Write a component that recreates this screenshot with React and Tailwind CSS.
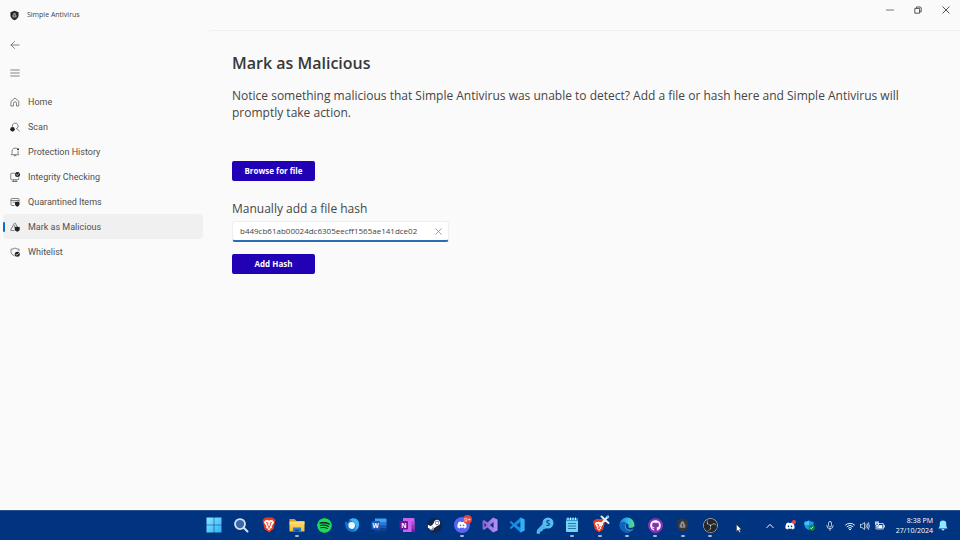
import { useState } from "react";
import { FaDiscord, FaSteamSymbol, FaGithub } from "react-icons/fa";
import { SiSpotify, SiObsstudio } from "react-icons/si";

const stroke = { fill: "none", stroke: "currentColor", strokeLinecap: "round", strokeLinejoin: "round" };

function ShieldLogo({ className, body = "#25262b", mark = "#8d9095" }) {
  return (
    <svg viewBox="0 0 20 22" className={className} aria-hidden="true">
      <path d="M10 0.500 19 3.500V11c0 5-4 8.500-9 10.500C5 19.500 1 16 1 11V3.500Z" fill={body} />
      <path d="M5.500 10H7V8a3 3 0 0 1 6 0v2h1.500v5.500h-9Z" fill={mark} />
      <path d="M10 10v3" stroke={body} strokeWidth="1.500" />
    </svg>
  );
}

function LineIcon({ children, className = "h-[10px] w-[10px]" }) {
  return (
    <svg viewBox="0 0 20 20" className={className} strokeWidth="1.400" {...stroke} aria-hidden="true">
      {children}
    </svg>
  );
}

const icons = {
  home: (
    <path d="M2.500 8.500 10 2l7.500 6.500V18H13v-5.500a3 3 0 0 0-6 0V18H2.500Z" />
  ),
  scan: (
    <>
      <path d="M4.500 9a6 6 0 1 1 8.500 4.500M14 13.500l5 5" />
      <circle cx="5" cy="14.500" r="4.500" fill="#222" stroke="none" />
    </>
  ),
  bell: (
    <>
      <path d="M13 2.500A6.500 6.500 0 0 0 4 8.500V13l-1.500 2.500h15L16 13V9M8 16a2 2 0 0 0 4 0" />
      <circle cx="16" cy="4.500" r="2" fill="#222" stroke="none" />
    </>
  ),
  monitor: (
    <>
      <path d="M9 2.500H3A1.500 1.500 0 0 0 1.500 4v10A1.500 1.500 0 0 0 3 15.500h13a1.500 1.500 0 0 0 1.500-1.500v-2M7 16v3M12 16v3M5 19h9" />
      <circle cx="15" cy="5" r="5" fill="#222" stroke="none" />
      <path d="m12.500 5 2 2 3-3.500" stroke="#fff" />
    </>
  ),
  box: (
    <>
      <path d="M8 17H4a2 2 0 0 1-2-2V4.500A1.500 1.500 0 0 1 3.500 3h13A1.500 1.500 0 0 1 18 4.500V9M2 7h16M6 10.500h5" />
      <path d="M14.500 9 19 10.500V14c0 3-2 4.500-4.500 5.500C12 18.500 10 17 10 14v-3.500Z" fill="#222" stroke="none" />
    </>
  ),
  warning: (
    <>
      <path d="M8 17H2.500a1 1 0 0 1-1-1.500L8.500 3a1.400 1.400 0 0 1 2.500 0l3 5.500M9.500 7v4" />
      <path d="M14.500 9 19.500 10.500V14c0 3-2 4.500-5 5.500C11.500 18.500 9.500 17 9.500 14v-3.500Z" fill="#222" stroke="none" />
    </>
  ),
  whitelist: (
    <>
      <path d="M8.500 17.500C4.500 16 2 13 2 9V4.500C5 4.500 7.500 3.500 10 2c2.500 1.500 5 2.500 8 2.500V8" />
      <circle cx="14.500" cy="14.500" r="5" fill="#222" stroke="none" />
      <path d="m12 14.500 2 2 3-3.500" stroke="#fff" />
    </>
  ),
};

const nav = [
  ["Home", "home"],
  ["Scan", "scan"],
  ["Protection History", "bell"],
  ["Integrity Checking", "monitor"],
  ["Quarantined Items", "box"],
  ["Mark as Malicious", "warning"],
  ["Whitelist", "whitelist"],
];

function TitleBar() {
  return (
    <header className="flex h-[30px] shrink-0 items-center justify-between">
      <div className="flex items-center gap-2 pl-[10px]">
        <ShieldLogo className="h-[11px] w-[9px]" />
        <span className="text-[7px] leading-3">Simple Antivirus</span>
      </div>
      <div className="flex h-5 items-center self-start text-[#555]">
        <button aria-label="Minimise" className="grid h-5 w-7 place-items-center">
          <LineIcon className="h-2 w-2"><path d="M1 10h18" strokeWidth="2" /></LineIcon>
        </button>
        <button aria-label="Restore" className="grid h-5 w-7 place-items-center">
          <LineIcon className="h-2 w-2">
            <path d="M3 6h11v12H3ZM6 6V2.500h9A3 3 0 0 1 18 5v9.500h-4" strokeWidth="2.500" />
          </LineIcon>
        </button>
        <button aria-label="Close" className="grid h-5 w-7 place-items-center">
          <LineIcon className="h-2 w-2"><path d="m2 2 16 16M18 2 2 18" strokeWidth="2.500" /></LineIcon>
        </button>
      </div>
    </header>
  );
}

function Sidebar() {
  return (
    <aside className="flex w-[207px] shrink-0 flex-col pl-[3px] pr-1 text-[#505050]">
      <button aria-label="Back" className="grid h-[30px] w-6 place-items-center">
        <LineIcon><path d="M18 10H2M9 3l-7 7 7 7" /></LineIcon>
      </button>
      <button aria-label="Menu" className="mb-1 grid h-[25px] w-6 place-items-center">
        <LineIcon><path d="M1.500 4h17M1.500 10h17M1.500 16h17" /></LineIcon>
      </button>
      <nav className="flex flex-col">
        {nav.map(([label, icon]) => {
          const active = label === "Mark as Malicious";
          return (
            <a
              key={label}
              href="#"
              aria-current={active ? "page" : undefined}
              className={`flex h-[25px] items-center rounded-sm ${active ? "bg-[#f0f0f0]" : ""}`}
            >
              <span className={`mr-[5px] h-[10px] w-[2px] rounded-full ${active ? "bg-[#0f6cbd]" : ""}`} />
              <LineIcon>{icons[icon]}</LineIcon>
              <span className="ml-2 font-[Roboto,sans-serif] text-[9px] leading-3">{label}</span>
            </a>
          );
        })}
      </nav>
    </aside>
  );
}

function Content() {
  const [hash, setHash] = useState("b449cb61ab00024dc6305eecff1565ae141dce02");
  const button =
    "h-5 w-[83px] rounded-[2px] bg-[#2200b5] text-[8px] leading-3 font-bold text-white";
  return (
    <main className="flex min-w-0 flex-1 flex-col items-start rounded-tl-md border-t border-l border-t-[#eeeeee] border-l-transparent px-6 pt-5">
      <h1 className="text-[16px] leading-6 font-semibold text-[#383838]">Mark as Malicious</h1>
      <p className="mt-3 max-w-[680px] text-[12px] leading-[17px] text-[#454545]">
        Notice something malicious that Simple Antivirus was unable to detect? Add a file or hash here and Simple
        Antivirus will promptly take action.
      </p>
      <button className={`mt-10 ${button}`}>Browse for file</button>
      <label htmlFor="hash" className="mt-5 text-[12px] leading-4 text-[#454545]">
        Manually add a file hash
      </label>
      <div className="mt-1 flex h-[21px] w-[217px] items-center rounded-[3px] border border-b-2 border-[#efefef] border-b-[#2b6cb5] bg-white pr-[6px] pl-[7px]">
        <input
          id="hash"
          value={hash}
          onChange={(e) => setHash(e.target.value)}
          className="min-w-0 flex-1 bg-transparent text-[8px] leading-3 text-[#444] outline-none"
        />
        <button aria-label="Clear" onClick={() => setHash("")} className="text-[#888]">
          <LineIcon className="h-[7px] w-[7px]"><path d="m2 2 16 16M18 2 2 18" strokeWidth="2.200" /></LineIcon>
        </button>
      </div>
      <button className={`mt-3 ${button}`}>Add Hash</button>
    </main>
  );
}

function Art({ children }) {
  return <svg viewBox="0 0 32 32" className="h-4 w-4" aria-hidden="true">{children}</svg>;
}

const gradients = (
  <svg className="absolute h-0 w-0" aria-hidden="true">
    <defs>
      <linearGradient id="win" x2="1" y2="1"><stop stopColor="#8be5ff" /><stop offset="1" stopColor="#28b3f5" /></linearGradient>
      <linearGradient id="edge" x2="1" y2="0"><stop stopColor="#1480d8" /><stop offset=".6" stopColor="#35bfe0" /><stop offset="1" stopColor="#63de64" /></linearGradient>
      <linearGradient id="folder" x2="0" y2="1"><stop stopColor="#ffe07a" /><stop offset="1" stopColor="#f6b92e" /></linearGradient>
      <linearGradient id="vs"><stop stopColor="#8a5fd0" /><stop offset="1" stopColor="#b892f2" /></linearGradient>
    </defs>
  </svg>
);

const apps = [
  ["Start", <Art><path d="M1 1h14.500v14.500H1ZM16.500 1H31v14.500H16.500ZM1 16.500h14.500V31H1ZM16.500 16.500H31V31H16.500Z" fill="url(#win)" /></Art>],
  ["Search", <Art><circle cx="14" cy="14" r="10" fill="#3a68a8" stroke="#d9e2f0" strokeWidth="3.500" /><path d="m22 22 7 7" stroke="#d9e2f0" strokeWidth="4" strokeLinecap="round" /></Art>],
  ["Brave", <Art><path d="m9 1-6 5 1 4 3 14 9 7 9-7 3-14 1-4-6-5Z" fill="#ec3a1e" /><path d="m8 7 4-1 4 1 4-1 4 1 2 4-5 8 1 2-6 6-6-6 1-2-5-8Z" fill="#fff" /><path d="m10 11 4 1-1 4 3 4 3-4-1-4 4-1M13 23l3-2 3 2" fill="none" stroke="#ec3a1e" strokeWidth="1.800" /></Art>],
  ["File Explorer", <Art><path d="M1 4h10l4 4h16v7H1Z" fill="#e59e19" /><path d="M1 9h30v20H1Z" fill="url(#folder)" /><path d="M8 21h16v8H8Z" fill="#247bd0" /><path d="M12 25h8v4h-8Z" fill="#0b4f9b" /></Art>, true],
  ["Spotify", <SiSpotify className="h-[15px] w-[15px] rounded-full bg-[#092c20] text-[#1ed760]" />],
  ["Thunderbird", <Art><path d="M2 8c0 5 0 10 3 15 3 6 11 8 17 6 7-3 10-10 8-17-1-5-4-8-8-9 1 2 0 3 0 3-6-3-14 0-15 6Z" fill="#1273d0" /><path d="M10 6c7-6 16-4 19 3 3 8-1 17-10 20 5-5 6-11 3-15-2-4-7-7-12-8Z" fill="#39b4f4" /><path d="M9 14c2-4 7-5 10-3 4 2 4 8 1 12-5 2-10 0-11-4Z" fill="#edf8ff" /></Art>],
  ["Word", <Art><path d="M8 3h21a2 2 0 0 1 2 2v6H8Z" fill="#41a5ee" /><path d="M8 10h23v7H8Z" fill="#2b7cd3" /><path d="M8 16h23v7H8Z" fill="#185abd" /><path d="M8 22h23v5a2 2 0 0 1-2 2H8Z" fill="#103f91" /><rect x="1" y="8" width="17" height="17" rx="2" fill="#185abd" /><text x="3" y="21" fontSize="13" fontWeight="700" fill="#fff">W</text></Art>],
  ["OneNote", <Art><path d="M8 2h21a2 2 0 0 1 2 2v24a2 2 0 0 1-2 2H8Z" fill="#ca64ea" /><path d="M25 9h6v7h-6Z" fill="#ae4bd5" /><path d="M25 16h6v7h-6Z" fill="#9332bf" /><path d="M25 23h6v5a2 2 0 0 1-2 2h-4Z" fill="#7719aa" /><rect x="1" y="8" width="17" height="17" rx="2" fill="#6f159d" /><text x="4.500" y="21" fontSize="13" fontWeight="700" fill="#fff">N</text></Art>],
  ["Steam", <span className="grid h-[15px] w-[15px] place-items-center rounded-full bg-[#12264a] text-white"><FaSteamSymbol className="h-[14px] w-[14px]" /></span>],
  ["Discord", (
    <span className="relative grid h-4 w-4 place-items-center rounded-full bg-[#5865f2] text-white">
      <FaDiscord className="h-[10px] w-[10px]" />
      <span className="absolute -top-[2px] -right-[2px] grid h-[9px] w-[9px] place-items-center rounded-full bg-[#e5463b] text-[6px] leading-none">9+</span>
    </span>
  ), true],
  ["Visual Studio", <Art><path d="m22 1 9 4v22l-9 4L11 21l-7 5-3-2V8l3-2 7 5ZM23 10l-7 6 7 6ZM5 12v8l4-4Z" fill="url(#vs)" fillRule="evenodd" /></Art>],
  ["Visual Studio Code", <Art><path d="m23 1 8 4v22l-8 4L10 19l-6 5-3-2 6-6-6-6 3-2 6 5ZM23 10l-8 6 8 6Z" fill="#168fe0" fillRule="evenodd" /><path d="m23 1 8 4v22l-8 4Z" fill="#35b0f5" /></Art>],
  ["Key manager", (
    <svg viewBox="0 0 36 36" className="h-[18px] w-[18px]" aria-hidden="true">
      <path d="m15 12 9 9-7 3-3 1-1 3-4 1-2 5-6-1 1-7Z" fill="#4eb4ef" />
      <circle cx="24" cy="12" r="11" fill="#55bdf6" />
      <text x="19.500" y="18" fontSize="16" fontWeight="700" fill="#124b8c">S</text>
    </svg>
  )],
  ["Notepad", <Art><rect x="4" y="3" width="24" height="27" rx="2" fill="#78d3f5" /><path d="M4 3h24v5H4Z" fill="#299bd5" /><path d="M8 1v5M13 1v5M18 1v5M23 1v5" stroke="#d9f4ff" strokeWidth="2" /><path d="M8 13h16M8 18h16M8 23h16" stroke="#237dad" strokeWidth="2" /></Art>, true],
  ["Brave with tools", (
    <span className="relative grid h-4 w-4 place-items-center">
      <svg viewBox="0 0 32 32" className="h-[15px] w-[15px]" aria-hidden="true">
        <path d="m9 2-7 5 1 4 3 13 9 7 9-7 3-13 1-4-5-5Z" fill="#ec3a1e" />
        <path d="m8 9 7-1 8 2 1 3-5 7 1 2-5 5-5-5 1-2-5-7Z" fill="#fff" />
        <path d="m10 13 4 1-1 4 2 3 3-4M12 24l3-2 3 2" fill="none" stroke="#ec3a1e" strokeWidth="2" />
      </svg>
      <svg viewBox="0 0 20 20" className="absolute -top-[2px] -right-[2px] h-[10px] w-[10px]" aria-hidden="true">
        <path d="m3 3 14 13M16 3 3 17" stroke="#dff1ff" strokeWidth="4" strokeLinecap="round" />
        <path d="m13 2 5 4" stroke="#55b8f2" strokeWidth="3" />
      </svg>
    </span>
  ), true],
  ["Edge", <Art><circle cx="16" cy="16" r="15" fill="url(#edge)" /><path d="M1 17c1-8 10-9 15-4-5 1-6 7-2 11s9 4 14 1c-5 8-16 8-22 2-3-3-5-6-5-10Z" fill="#105fb9" /><path d="M16 13c4 2 4 5 2 7 3 3 9 2 13-1l-2 5c-8 3-14 1-15-4-1-3 0-6 2-7Z" fill="#0b3579" /></Art>, true],
  ["GitHub Desktop", <span className="grid h-[15px] w-[15px] place-items-center rounded-full bg-[#8534b0] text-white"><FaGithub className="h-[11px] w-[11px]" /></span>, true],
  ["Simple Antivirus", <ShieldLogo className="h-[14px] w-[13px]" body="#34363a" mark="#8b8d91" />, true],
  ["OBS Studio", <SiObsstudio className="h-[15px] w-[15px] rounded-full bg-[#25262a] text-[#c8c8c8]" />, true],
];

function Tray({ label, children }) {
  return <button aria-label={label} className="grid h-5 place-items-center">{children}</button>;
}

function Taskbar() {
  return (
    <footer className="relative flex h-[30px] shrink-0 items-center border-t border-[#2a5190] bg-[#003380] text-white">
      {gradients}
      <div className="ml-[200px] grid w-[524px] grid-cols-19">
        {apps.map(([name, art, running]) => (
          <button key={name} aria-label={name} className="flex h-[29px] flex-col items-center pt-[6px]">
            <span className="grid h-4 place-items-center">{art}</span>
            {running && <span className="mt-[2px] h-[2px] w-1 rounded-full bg-[#a5b6d0]" />}
          </button>
        ))}
      </div>
      <svg viewBox="0 0 12 18" className="absolute top-[13px] left-[736px] h-[9px] w-[6px]" aria-hidden="true">
        <path d="M1 1v14l3-3 3 5 2-1-2-5h4Z" fill="#fff" stroke="#333" />
      </svg>
      <div className="ml-auto flex items-center pr-3">
        <div className="mr-[3px] grid w-[80px] grid-cols-4">
          <Tray label="Hidden icons"><LineIcon className="h-2 w-2"><path d="m2 14 8-8 8 8" strokeWidth="2.500" /></LineIcon></Tray>
          <Tray label="Discord">
            <span className="relative"><FaDiscord className="h-[10px] w-[10px]" /><span className="absolute -top-px -right-px h-1 w-1 rounded-full bg-[#f04747]" /></span>
          </Tray>
          <Tray label="Windows Security">
            <svg viewBox="0 0 22 22" className="h-[11px] w-[11px]" aria-hidden="true">
              <path d="M10 1c3 2 6 2.500 9 2.500V10c0 5-4 8-9 10-5-2-9-5-9-10V3.500C4 3.500 7 3 10 1Z" fill="#169ce8" />
              <path d="M10 1v9H1V3.500C4 3.500 7 3 10 1Z" fill="#45c0f5" />
              <circle cx="15.500" cy="15.500" r="6" fill="#138a35" /><path d="m12.500 15.500 2 2 4-4" fill="none" stroke="#fff" strokeWidth="1.600" />
            </svg>
          </Tray>
          <Tray label="Microphone"><LineIcon><rect x="7" y="1" width="6" height="11" rx="3" /><path d="M3.500 9a6.500 6.500 0 0 0 13 0M10 15.500V19" /></LineIcon></Tray>
        </div>
        <div className="mr-2 grid w-[45px] grid-cols-3">
          <Tray label="Network"><LineIcon><path d="M1 8a13 13 0 0 1 18 0M4 11a9 9 0 0 1 12 0M7 14a5 5 0 0 1 6 0" strokeWidth="1.800" /><circle cx="10" cy="17" r="1" fill="white" /></LineIcon></Tray>
          <Tray label="Volume"><LineIcon><path d="M1 7v6h3l5 4V3L4 7ZM12 7q2 3 0 6M14.500 5q3.500 5 0 10M17 3q4 7 0 14" /></LineIcon></Tray>
          <Tray label="Battery"><LineIcon><path d="M6 5h10.500v11H2v-6M17 8.500h2v4h-2" /><path d="M8 9h6v5H6Z" fill="white" /><path d="M2 1v3M6 1v3M1 4h6v2a3 3 0 0 1-6 0ZM4 9v3" strokeWidth="2" /></LineIcon></Tray>
        </div>
        <time className="mr-[5px] text-right text-[7px] leading-[10px]">8:38 PM<br />27/10/2024</time>
        <Tray label="Notifications">
          <svg viewBox="0 0 20 22" className="h-[11px] w-[10px]" aria-hidden="true">
            <path d="M10 1a6.500 6.500 0 0 0-6.500 6.500V12L1 17h18l-2.500-5V7.500A6.500 6.500 0 0 0 10 1ZM7 18a3 3 0 0 0 6 0Z" fill="#8eeaff" />
          </svg>
        </Tray>
      </div>
    </footer>
  );
}

export default function App() {
  return (
    <div className="flex min-h-screen flex-col bg-[#fafafa] font-['Open_Sans','Noto_Sans',sans-serif] text-[#444]">
      <TitleBar />
      <div className="flex flex-1">
        <Sidebar />
        <Content />
      </div>
      <Taskbar />
    </div>
  );
}
